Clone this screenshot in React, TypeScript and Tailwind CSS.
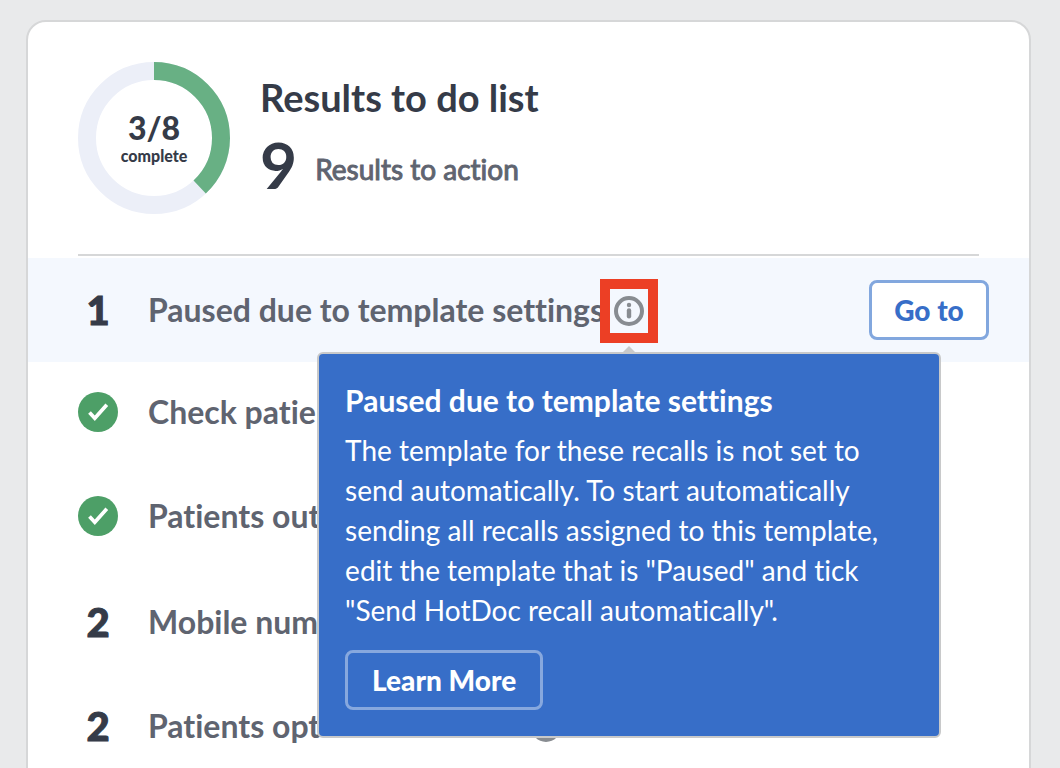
import React, { useState } from "react";

interface Task {
  name: string;
  count: number;
  hint?: string;
  help?: string;
}

interface DialProps {
  done: number;
  total: number;
}

const tasks: Task[] = [
  {
    name: "Paused due to template settings",
    count: 1,
    hint: 'The template for these recalls is not set to send automatically. To start automatically sending all recalls assigned to this template, edit the template that is "Paused" and tick "Send HotDoc recall automatically".',
  },
  { name: "Check patient details", count: 0 },
  { name: "Patients outstanding", count: 0 },
  { name: "Mobile number missing", count: 2 },
  { name: "Patients opted out of SMS", count: 2, help: "About opted out patients" },
];

const Dial = ({ done, total }: DialProps) => {
  const length = 2 * Math.PI * 67;
  const percent = Math.round((done / total) * 100);
  return (
    <div className="relative size-38 shrink-0">
      <svg viewBox="0 0 152 152" className="size-full -rotate-90" fill="none" strokeWidth="18">
        <circle cx="76" cy="76" r="67" stroke="#eceff8" />
        <circle
          cx="76"
          cy="76"
          r="67"
          stroke="#68b084"
          strokeDasharray={`${(length * percent) / 100} ${length}`}
        />
      </svg>
      <div className="absolute inset-0 flex flex-col items-center justify-center font-black text-[#353b48]">
        <span className="text-[32px] leading-9">
          {done}/{total}
        </span>
        <span className="text-base leading-5">complete</span>
      </div>
    </div>
  );
};

const InfoIcon = () => (
  <svg viewBox="0 0 30 30" className="size-[30px]" fill="none">
    <circle cx="15" cy="15" r="13" stroke="#888c91" strokeWidth="4" />
    <circle cx="15" cy="9" r="2.2" fill="#888c91" />
    <path d="M15 14.5v5.7" stroke="#888c91" strokeWidth="4.4" strokeLinecap="round" />
  </svg>
);

const DoneIcon = () => (
  <svg viewBox="0 0 40 40" className="size-10" fill="none">
    <circle cx="20" cy="20" r="20" fill="#4d9f67" />
    <path d="M11.5 20.5l5.3 5.7L28.8 12.8" stroke="#fff" strokeWidth="3.7" />
  </svg>
);

const App: React.FC = () => {
  const [open, setOpen] = useState(true);

  return (
    <div className="h-screen overflow-hidden bg-[#e9eaeb] pt-5 pr-[29px] pl-[26px] font-[Lato,sans-serif] [font-variant-ligatures:none]">
      <main className="rounded-[20px] border-2 border-[#d6d7d8] bg-white pb-10">
        <div className="mx-[50px] flex gap-[30px] border-b-2 border-[#d6d7d8] pt-10 pb-10">
          <Dial done={3} total={8} />
          <div className="pt-[11px]">
            <h1 className="text-[38px] leading-12 font-bold text-[#353b48]">Results to do list</h1>
            <div className="mt-2 flex items-center gap-[18px]">
              <strong className="text-[64px] leading-18 font-bold text-[#353b48]">9</strong>
              <span className="pt-2 text-[28px] text-[#5f6470] [-webkit-text-stroke:1px]">
                Results to action
              </span>
            </div>
          </div>
        </div>

        <ul className="mt-[2px]">
          {tasks.map((task) => (
            <li
              key={task.name}
              className={`flex h-26 items-center pr-10 pl-[50px] ${
                task.hint ? "bg-[#f4f8fe]" : ""
              } ${task.count === 0 ? "pb-1" : ""}`}
            >
              <div className="flex w-10 justify-center text-[40px] font-black text-[#353b48] [-webkit-text-stroke:1px]">
                {task.count > 0 ? task.count : <DoneIcon />}
              </div>
              <span className="ml-[30px] text-[32px] font-bold whitespace-nowrap text-[#5f6470]">
                {task.name}
              </span>

              {task.help && (
                <button aria-label={task.help} className="mt-[2px] ml-[10px]">
                  <InfoIcon />
                </button>
              )}

              {task.hint && (
                <div className="relative mt-[2px] ml-[10px] flex">
                  <button
                    aria-label="About paused recalls"
                    aria-expanded={open}
                    onClick={() => setOpen(!open)}
                    className="cursor-pointer"
                  >
                    <InfoIcon />
                  </button>
                  <span className="pointer-events-none absolute -inset-x-[14px] -inset-y-[17px] border-10 border-[#ec3f25]"></span>
                  {open && (
                    <div className="absolute top-full left-1/2 z-10 mt-[26px] w-[624px] -translate-x-1/2 rounded-md border-2 border-[#c8c9ca] bg-[#376ec8] px-[26px] py-[26px] text-white">
                      <span className="absolute bottom-full left-1/2 -translate-x-1/2 border-x-8 border-b-8 border-x-transparent border-b-[#c8c9ca]"></span>
                      <h2 className="text-[30px] leading-10 font-bold">{task.name}</h2>
                      <p className="mt-[10px] text-[28px] leading-10">{task.hint}</p>
                      <button className="mt-5 h-15 cursor-pointer rounded-lg border-3 border-[#87a8de] px-6 text-[28px] leading-10 font-black">
                        Learn More
                      </button>
                    </div>
                  )}
                </div>
              )}

              {task.hint && (
                <button className="ml-auto h-15 w-30 cursor-pointer rounded-lg border-3 border-[#82a7de] bg-white text-[28px] font-black text-[#376ec8]">
                  Go to
                </button>
              )}
            </li>
          ))}
        </ul>
      </main>
    </div>
  );
};

export default App;
